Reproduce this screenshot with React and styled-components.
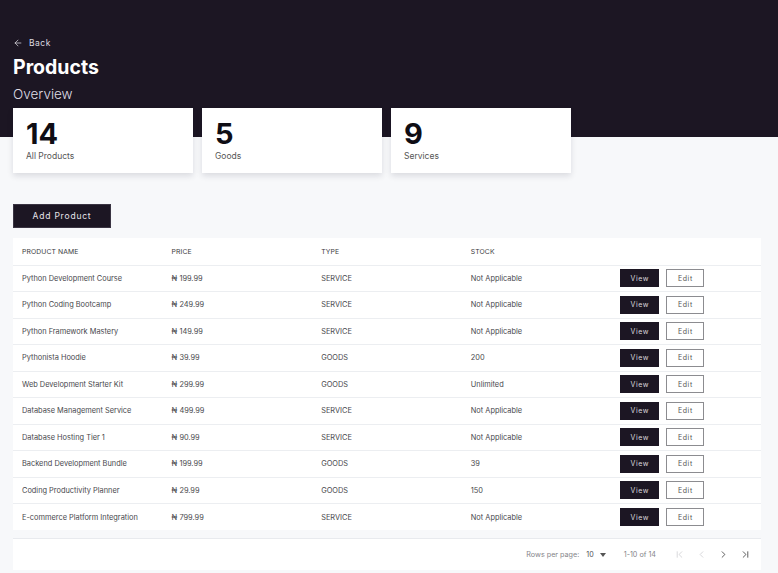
import React from "react";
import styled, { createGlobalStyle } from "styled-components";
import { ArrowLeft, ChevronFirst, ChevronLeft, ChevronRight, ChevronLast } from "lucide-react";

const DARK = "#1c1623";

const GlobalStyle = createGlobalStyle`
  html, body { margin: 0; padding: 0; }
  body {
    background: #f7f8fa;
    font-family: Inter, "Noto Sans", "Liberation Sans", sans-serif;
    color: #222;
  }
  * { box-sizing: border-box; }
`;

const Page = styled.div`
  width: 778px;
  min-height: 573px;
  overflow: hidden;
`;

const Top = styled.header`
  background: linear-gradient(${DARK} 137px, transparent 137px);
  padding: 37px 17px 0 13px;
  display: flex;
  flex-direction: column;
`;

const BackLink = styled.a`
  display: flex;
  align-items: center;
  gap: 6px;
  color: #dcdae0;
  font-size: 8.5px;
  font-weight: 400;
  letter-spacing: 0.5px;
  height: 12px;
  cursor: pointer;
`;

const Title = styled.h1`
  margin: 6px 0 0;
  color: #fff;
  font-size: 19.5px;
  font-weight: 700;
  line-height: 24px;
`;

const Subtitle = styled.h2`
  margin: 6px 0 0;
  color: #dedce3;
  font-size: 13.5px;
  font-weight: 300;
  line-height: 18px;
`;

const Cards = styled.div`
  display: flex;
  gap: 9px;
  margin-top: 5px;
`;

const Card = styled.div`
  width: 180px;
  height: 65px;
  background: #fff;
  box-shadow: 0 3px 6px rgba(20, 20, 40, 0.12);
  padding: 11px 13px;
  display: flex;
  flex-direction: column;
`;

const CardNumber = styled.div`
  font-size: 29px;
  font-weight: 700;
  line-height: 29px;
  color: #0f0d14;
`;

const CardLabel = styled.div`
  margin-top: 3px;
  font-size: 8.5px;
  color: #555;
`;

const Main = styled.main`
  padding: 31px 17px 0 13px;
  display: flex;
  flex-direction: column;
`;

const PrimaryButton = styled.button`
  align-self: flex-start;
  width: 98px;
  height: 24px;
  background: ${DARK};
  color: #e6e4ea;
  border: 1px solid #3a3442;
  font-family: inherit;
  font-size: 8.5px;
  font-weight: 400;
  letter-spacing: 0.8px;
  cursor: pointer;
`;

const TableWrap = styled.div`
  margin-top: 10px;
  background: #fff;
`;

const Table = styled.table`
  width: 748px;
  border-collapse: collapse;
  table-layout: fixed;
`;

const Th = styled.th`
  text-align: left;
  font-size: 6.8px;
  font-weight: 400;
  color: #3a3a3e;
  letter-spacing: 0.1px;
  height: 27px;
  padding: 0 0 0 9px;
  border-bottom: 1px solid #eceef1;
`;

const Tr = styled.tr`
  height: 26.5px;
  border-bottom: 1px solid #eceef1;
  &:last-child { border-bottom: none; }
`;

const Td = styled.td`
  font-size: 7.4px;
  font-weight: 400;
  color: #48484d;
  padding: 0 0 0 9px;
  white-space: nowrap;
`;

const Actions = styled.div`
  display: flex;
  gap: 7px;
`;

const SmallButton = styled.button`
  height: 18px;
  width: ${(p) => (p.$solid ? "39px" : "38px")};
  background: ${(p) => (p.$solid ? DARK : "#fff")};
  color: ${(p) => (p.$solid ? "#d8d6dc" : "#555")};
  border: 1px solid ${(p) => (p.$solid ? DARK : "#8c8c90")};
  font-family: inherit;
  font-size: 7px;
  font-weight: 400;
  letter-spacing: 0.6px;
  padding: 0;
  cursor: pointer;
`;

const Pager = styled.div`
  margin-top: 8px;
  height: 32px;
  background: #fff;
  border-top: 1px solid #e8eaee;
  display: flex;
  align-items: center;
  justify-content: flex-end;
  padding-right: 5px;
  font-size: 7.2px;
  color: #858589;
`;

const RowsLabel = styled.span`
  margin-right: 7px;
`;

const RowsSelect = styled.span`
  display: flex;
  align-items: center;
  gap: 6px;
  color: #555;
  margin-right: 18px;
`;

const Range = styled.span`
  margin-right: 12px;
`;

const PageBtn = styled.span`
  width: 22px;
  display: flex;
  justify-content: center;
  color: ${(p) => (p.$disabled ? "#c6c6cb" : "#333")};
`;

const products = [
  ["Python Development Course", "199.99", "SERVICE", "Not Applicable"],
  ["Python Coding Bootcamp", "249.99", "SERVICE", "Not Applicable"],
  ["Python Framework Mastery", "149.99", "SERVICE", "Not Applicable"],
  ["Pythonista Hoodie", "39.99", "GOODS", "200"],
  ["Web Development Starter Kit", "299.99", "GOODS", "Unlimited"],
  ["Database Management Service", "499.99", "SERVICE", "Not Applicable"],
  ["Database Hosting Tier 1", "90.99", "SERVICE", "Not Applicable"],
  ["Backend Development Bundle", "199.99", "GOODS", "39"],
  ["Coding Productivity Planner", "29.99", "GOODS", "150"],
  ["E-commerce Platform Integration", "799.99", "SERVICE", "Not Applicable"],
];

const stats = [
  ["14", "All Products"],
  ["5", "Goods"],
  ["9", "Services"],
];

export default function App() {
  return (
    <Page>
      <GlobalStyle />
      <Top>
        <BackLink>
          <ArrowLeft size={10} strokeWidth={1.8} />
          Back
        </BackLink>
        <Title>Products</Title>
        <Subtitle>Overview</Subtitle>
        <Cards>
          {stats.map(([n, l]) => (
            <Card key={l}>
              <CardNumber>{n}</CardNumber>
              <CardLabel>{l}</CardLabel>
            </Card>
          ))}
        </Cards>
      </Top>
      <Main>
        <PrimaryButton>Add Product</PrimaryButton>
        <TableWrap>
          <Table>
            <thead>
              <tr>
                <Th>PRODUCT NAME</Th>
                <Th>PRICE</Th>
                <Th>TYPE</Th>
                <Th>STOCK</Th>
                <Th></Th>
              </tr>
            </thead>
            <tbody>
              {products.map(([name, price, type, stock]) => (
                <Tr key={name}>
                  <Td>{name}</Td>
                  <Td>₦ {price}</Td>
                  <Td>{type}</Td>
                  <Td>{stock}</Td>
                  <Td>
                    <Actions>
                      <SmallButton $solid>View</SmallButton>
                      <SmallButton>Edit</SmallButton>
                    </Actions>
                  </Td>
                </Tr>
              ))}
            </tbody>
          </Table>
        </TableWrap>
        <Pager>
          <RowsLabel>Rows per page:</RowsLabel>
          <RowsSelect>
            10
            <svg width="6" height="4" viewBox="0 0 6 4">
              <path d="M0 0h6L3 4z" fill="#555" />
            </svg>
          </RowsSelect>
          <Range>1-10 of 14</Range>
          <PageBtn $disabled><ChevronFirst size={11} strokeWidth={1.5} /></PageBtn>
          <PageBtn $disabled><ChevronLeft size={11} strokeWidth={1.5} /></PageBtn>
          <PageBtn><ChevronRight size={11} strokeWidth={1.7} /></PageBtn>
          <PageBtn><ChevronLast size={11} strokeWidth={1.7} /></PageBtn>
        </Pager>
      </Main>
    </Page>
  );
}
